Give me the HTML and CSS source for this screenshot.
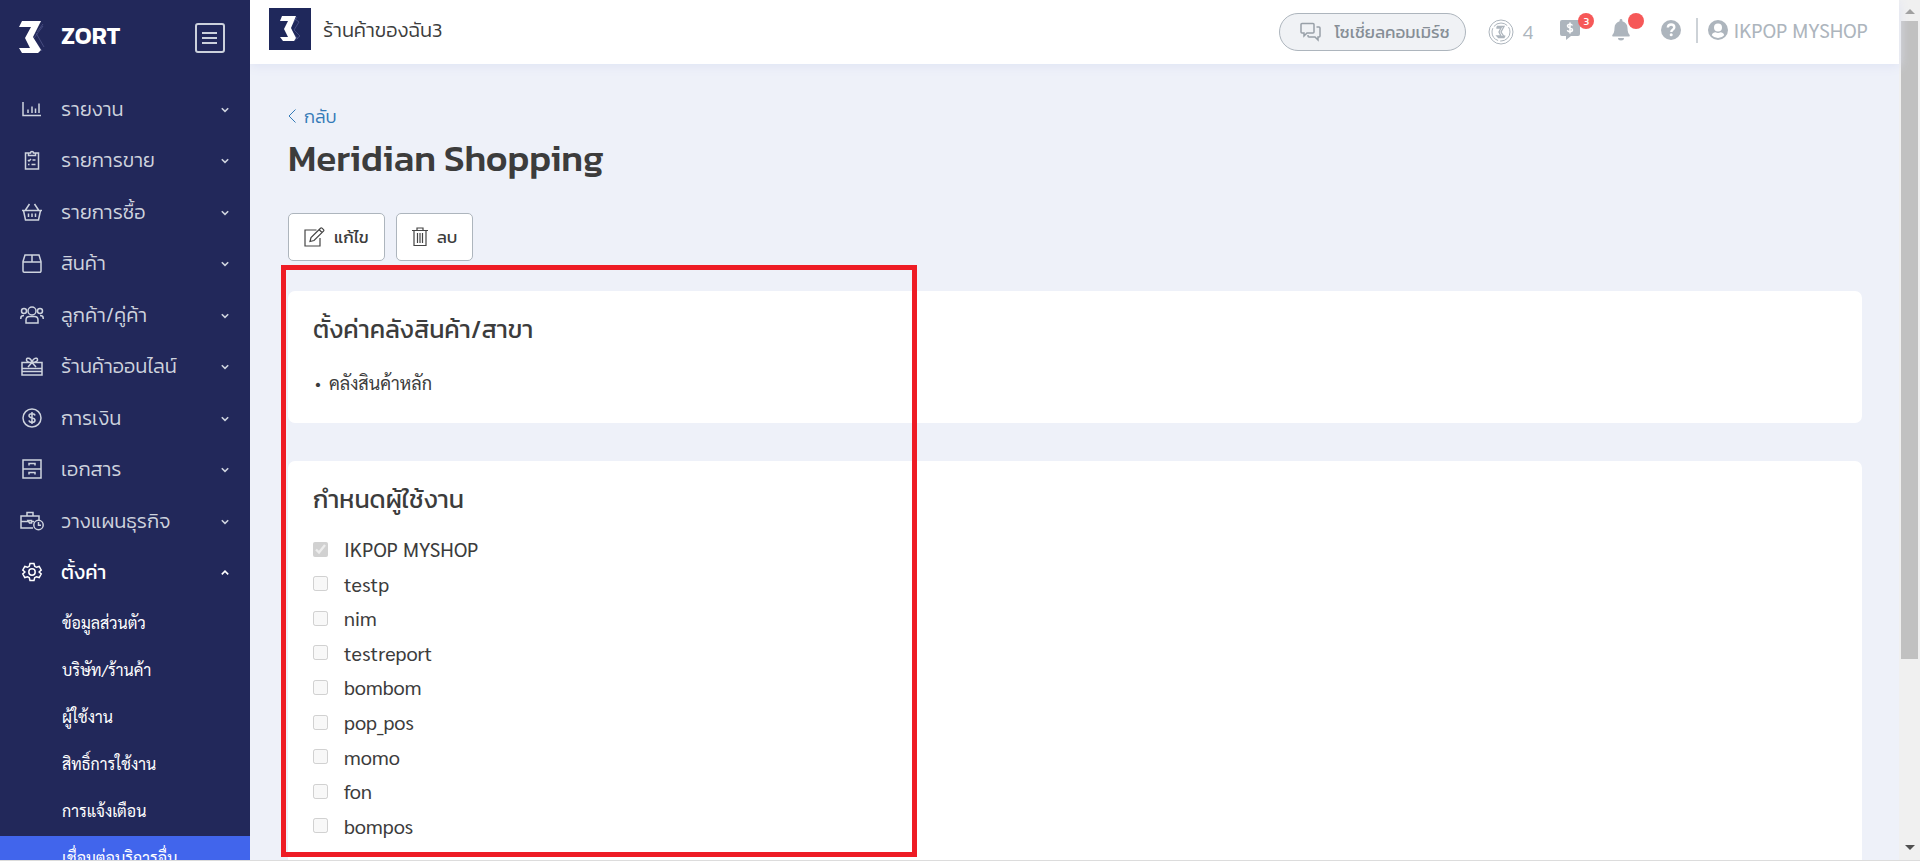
FILE: index.html
```html
<!DOCTYPE html>
<html lang="th">
<head>
<meta charset="utf-8">
<title>ZORT</title>
<link rel="stylesheet" href="styles.css">
</head>
<body>
<div class="app">
  <nav class="sidebar">
    <div class="brand">
      <svg class="brand-mark" width="26" height="33" viewBox="0 0 26 33"><path d="M14 1h8M24 3l-6 8M17 12l8 14M24 5l-9 12M15 19l8 11M13 31l5-9" stroke="#5d6397" stroke-width="1" fill="none" opacity=".6"/><path d="M3 0h19l-8 16 8 13-3 3H3L0 27h9l2 0-5-10L12 6H0z" fill="#fff"/></svg>
      <span class="brand-name">ZORT</span>
      <button class="collapse" aria-label="เมนู"><svg width="30" height="30" viewBox="0 0 30 30" fill="none" stroke="#ccd1dc" stroke-width="2"><rect x="1" y="1" width="28" height="28" rx="2"/><path d="M7 10h15M7 15h15M7 20h15"/></svg></button>
    </div>
    <ul class="menu">
      <li><a href="#"><svg class="mi" viewBox="0 0 24 24"><path d="M3 5v13.500h18M8 16v-3.500M12 16V9.500M15.500 16v-4.500M19 16V6.500"/></svg>รายงาน<svg class="chev" viewBox="0 0 10 10"><path d="M1 4l4 4 4-4"/></svg></a></li>
      <li><a href="#"><svg class="mi" viewBox="0 0 24 24"><path d="M8.500 5H5.500v16h13V5h-3M8.500 7.500V5h2a1.500 1.500 0 0 1 3 0h2v2.500zM8 12l1 1 2-2M12.500 12h3M8 16.500h1.500M11.500 16.500h4"/></svg>รายการขาย<svg class="chev" viewBox="0 0 10 10"><path d="M1 4l4 4 4-4"/></svg></a></li>
      <li><a href="#"><svg class="mi" viewBox="0 0 24 24"><path d="M2 10.500h20M3.500 10.500L5.500 20h13l2-9.500M9.500 4L5.500 10M14.500 4l4 6M8.500 13.500v3.500M12 13.500v3.500M15.500 13.500v3.500"/></svg>รายการซื้อ<svg class="chev" viewBox="0 0 10 10"><path d="M1 4l4 4 4-4"/></svg></a></li>
      <li><a href="#"><svg class="mi" viewBox="0 0 24 24"><path d="M3 10.500L5 4h14l2 6.500V20a1.200 1.200 0 0 1-1.200 1.200H4.200A1.200 1.200 0 0 1 3 20zM3 11h18M12 4v7"/></svg>สินค้า<svg class="chev" viewBox="0 0 10 10"><path d="M1 4l4 4 4-4"/></svg></a></li>
      <li><a href="#"><svg class="mi" viewBox="0 0 24 24"><circle cx="12" cy="8" r="4"/><circle cx="4" cy="8" r="2.500"/><circle cx="20" cy="8" r="2.500"/><path d="M6 20v-3c0-2 1.500-3.500 3.500-3.500h5c2 0 3.500 1.500 3.500 3.500v3zM.8 16v-1c0-1.500 1-2.500 3.200-2.500M23.200 16v-1c0-1.500-1-2.500-3.200-2.500"/></svg>ลูกค้า/คู่ค้า<svg class="chev" viewBox="0 0 10 10"><path d="M1 4l4 4 4-4"/></svg></a></li>
      <li><a href="#"><svg class="mi" viewBox="0 0 24 24"><path d="M2 8.500h20V21H2zM2 14.500h20M2 17.500h20M12 8.500C8 8.500 6 7 6.500 5.200S11 3.500 12 8.500c1-5 5-5 5.500-3.300S16 8.500 12 8.500l-4 4.500M12 8.500l4 4.500"/></svg>ร้านค้าออนไลน์<svg class="chev" viewBox="0 0 10 10"><path d="M1 4l4 4 4-4"/></svg></a></li>
      <li><a href="#"><svg class="mi" viewBox="0 0 24 24"><circle cx="12" cy="12" r="9"/><path d="M15 9.500c-.3-1.300-1.500-1.800-3-1.800s-3 .6-3 2.100c0 3.100 6 1.400 6 4.400 0 1.500-1.500 2.100-3 2.100s-2.800-.6-3-2M12 6v12"/></svg>การเงิน<svg class="chev" viewBox="0 0 10 10"><path d="M1 4l4 4 4-4"/></svg></a></li>
      <li><a href="#"><svg class="mi" viewBox="0 0 24 24"><path d="M3 3h18v18H3zM3 12h18M9 8.500v-2h6v2M9 17.500v-2h6v2"/></svg>เอกสาร<svg class="chev" viewBox="0 0 10 10"><path d="M1 4l4 4 4-4"/></svg></a></li>
      <li><a href="#"><svg class="mi" viewBox="0 0 24 24"><path d="M13 19H1V7h18v4M7 7V3.500h6V7M1 12.500h7.500M8 11.500h3.500v2.500H9.500zM11.500 12.500H14"/><circle cx="18.500" cy="16" r="4.700"/><path d="M18.500 13v3.200H21"/></svg>วางแผนธุรกิจ<svg class="chev" viewBox="0 0 10 10"><path d="M1 4l4 4 4-4"/></svg></a></li>
      <li class="open"><a href="#"><svg class="mi" viewBox="0 0 24 24"><circle cx="12" cy="12" r="3.200"/><path d="M10 3.500h4l.7 2.800 1.700 1 2.800-.8 2 3.500-2.100 2 2.100 2-2 3.500-2.800-.8-1.700 1-.7 2.800h-4l-.7-2.800-1.700-1-2.800.8-2-3.500 2.100-2-2.100-2 2-3.500 2.800.8 1.700-1z"/></svg>ตั้งค่า<svg class="chev" viewBox="0 0 10 10"><path d="M1 8l4-4 4 4"/></svg></a></li>
    </ul>
    <ul class="submenu">
      <li><a href="#">ข้อมูลส่วนตัว</a></li>
      <li><a href="#">บริษัท/ร้านค้า</a></li>
      <li><a href="#">ผู้ใช้งาน</a></li>
      <li><a href="#">สิทธิ์การใช้งาน</a></li>
      <li><a href="#">การแจ้งเตือน</a></li>
      <li class="active"><a href="#">เชื่อมต่อบริการอื่น</a></li>
    </ul>
  </nav>
  <div class="main">
    <header class="topbar">
      <svg class="shop-logo" width="42" height="42" viewBox="0 0 42 42"><path fill="#1f285b" d="M0 0h42v42H0z"/><path d="M22 8l8 6-5 8 6 6-6 5M28 9l-8 12 9 10" stroke="#5d6397" fill="none" opacity=".6"/><path d="M13 8h14l-5 12 5 10-2 3H14l-3-4h8l-4-8 4-8h-8z" fill="#fff"/></svg>
      <span class="shop-name">ร้านค้าของฉัน3</span>
      <button class="pill"><svg width="22" height="20" viewBox="0 0 22 20" fill="none" stroke="#98a0a8" stroke-width="1.500"><path d="M2 1.500h11a1 1 0 0 1 1 1V10a1 1 0 0 1-1 1H7l-3 3v-3H2a1 1 0 0 1-1-1V2.500a1 1 0 0 1 1-1z"/><path d="M16.500 5H19a1 1 0 0 1 1 1v8a1 1 0 0 1-1 1h-1v3l-3-3H9a1 1 0 0 1-1-1v-1"/></svg>โซเชี่ยลคอมเมิร์ซ</button>
      <a class="coin" href="#"><svg width="26" height="26" viewBox="0 0 26 26" fill="none" stroke="#adb5bd"><circle cx="13" cy="13" r="12"/><circle cx="13" cy="13" r="9" stroke-dasharray="15 2"/><path d="M9 7.500h7l-3 5.500 3 4.500h-6M9 7.500v1.500h4l-2 4 2 4H9l1.500 1.500H16l1-2" stroke-width="1.300"/></svg>4</a>
      <button class="note" aria-label="ข้อความ"><svg width="22" height="22" viewBox="0 0 22 22"><path fill="#adb5bd" d="M3 1h16a2 2 0 0 1 2 2v12a2 2 0 0 1-2 2h-7l-5 4v-4H3a2 2 0 0 1-2-2V3a2 2 0 0 1 2-2z"/><path d="M13.500 6.500c-.5-1-1.500-1.200-2.500-1.200s-2.500.4-2.500 1.800c0 2.300 5 1.300 5 3.700 0 1.400-1.400 1.900-2.500 1.900s-2.300-.4-2.600-1.600M11 3.500v11" fill="none" stroke="#fff" stroke-width="1.500"/></svg><span class="badge">3</span></button>
      <button class="note" aria-label="แจ้งเตือน"><svg width="20" height="22" viewBox="0 0 20 22" fill="#adb5bd"><path d="M10 0a1.400 1.400 0 0 1 1.400 1.400v.8C14.500 3 16.500 5.500 16.500 9c0 4 1 5.500 2 6.700.6.800.2 1.800-.9 1.800H2.400c-1.100 0-1.500-1-.9-1.800 1-1.200 2-2.700 2-6.700 0-3.500 2-6 5.100-6.800v-.8A1.400 1.400 0 0 1 10 0zM7 19h6a3 2.500 0 0 1-6 0z"/></svg><span class="badge"></span></button>
      <button class="help" aria-label="ช่วยเหลือ"><svg width="20" height="20" viewBox="0 0 20 20"><circle cx="10" cy="10" r="10" fill="#adb5bd"/><path d="M6.800 7.500c.2-2 1.500-3 3.300-3s3.200 1.100 3.200 2.800c0 2.400-3 2.300-3 4.700" fill="none" stroke="#fff" stroke-width="2.400"/><circle cx="10.200" cy="14.800" r="1.500" fill="#fff"/></svg></button>
      <a class="user" href="#"><svg width="20" height="20" viewBox="0 0 20 20"><circle cx="10" cy="10" r="10" fill="#adb5bd"/><circle cx="10" cy="7.500" r="4" fill="#fff"/><path d="M3.800 15.200c.6-2 2-2.900 3.700-2.900.8.400 1.600.6 2.500.6s1.700-.2 2.500-.6c1.700 0 3.100.9 3.700 2.900A8 8 0 0 1 10 18a8 8 0 0 1-6.200-2.800z" fill="#fff"/></svg>IKPOP MYSHOP</a>
    </header>
    <main class="content">
      <a class="back" href="#"><svg width="8" height="14" viewBox="0 0 8 14" fill="none" stroke="#337ab7"><path d="M7.500 .5L1 7l6.500 6.500"/></svg>กลับ</a>
      <h1>Meridian Shopping</h1>
      <div class="actions">
        <button class="btn"><svg width="21" height="20" viewBox="0 0 21 20" fill="none" stroke="#444" stroke-width="1.200"><path d="M12.500 3H1v16h15v-8M6 14.500l1-4L16.500 1.200c.5-.5 1-.5 1.500 0l1.500 1.500c.5.500.5 1 0 1.500L10 13.500zM15 2.500l3 3"/></svg>แก้ไข</button>
        <button class="btn"><svg width="16" height="20" viewBox="0 0 16 20" fill="none" stroke="#444" stroke-width="1.200"><path d="M0 3.500h16M2 3.500V18.500h12V3.500M5 3.500V1h6v2.500M5.500 6v10M8 6v10M10.500 6v10"/></svg>ลบ</button>
      </div>
      <section class="card">
        <h2>ตั้งค่าคลังสินค้า/สาขา</h2>
        <ul class="stock"><li>คลังสินค้าหลัก</li></ul>
      </section>
      <section class="card users">
        <h2>กำหนดผู้ใช้งาน</h2>
        <div class="checks">
          <label><input type="checkbox" checked disabled>IKPOP MYSHOP</label>
          <label><input type="checkbox" disabled>testp</label>
          <label><input type="checkbox" disabled>nim</label>
          <label><input type="checkbox" disabled>testreport</label>
          <label><input type="checkbox" disabled>bombom</label>
          <label><input type="checkbox" disabled>pop_pos</label>
          <label><input type="checkbox" disabled>momo</label>
          <label><input type="checkbox" disabled>fon</label>
          <label><input type="checkbox" disabled>bompos</label>
        </div>
      </section>
    </main>
    <div class="highlight"></div>
  </div>
  <div class="scrollbar">
    <svg width="10" height="6" viewBox="0 0 10 6"><path d="M0 5l5-5 5 5z" fill="#a0a0a0"/></svg>
    <div class="track"><div class="thumb"></div></div>
    <svg width="10" height="6" viewBox="0 0 10 6"><path d="M0 0l5 5 5-5z" fill="#505050"/></svg>
  </div>
</div>
<div class="edge"></div>
</body>
</html>
```
FILE: styles.css
```css
* { box-sizing: border-box; }
body { margin: 0; height: 100vh; display: flex; flex-direction: column; overflow: hidden; background: #fff; color: #3c3c3c; font-family: Kanit, "Noto Sans Thai", "Open Sans", sans-serif; font-size: 18px; }
a { color: inherit; text-decoration: none; }
ul { list-style: none; margin: 0; padding: 0; }
button { font: inherit; color: inherit; background: none; border: 0; padding: 0; }
svg { flex: none; display: block; }

.app { flex: 1; min-height: 0; display: flex; overflow: hidden; }
.edge { height: 5px; border-top: 1px solid #dcdcdc; }

.sidebar { position: relative; z-index: 1; flex: none; width: 250px; background: #22285a; color: #ced3de; overflow: hidden; }
.brand { display: flex; align-items: center; height: 83px; padding: 0 25px 8px 19px; }
.brand-mark { margin-right: 16px; }
.brand-name { padding-bottom: 3px; font-size: 24px; line-height: 30px; font-weight: 600; color: #fff; }
.collapse { margin-left: auto; }
.menu { display: grid; grid-auto-rows: 1fr; height: 515px; }
.menu a { display: flex; align-items: center; height: 100%; padding: 0 21px 0 20px; font-size: 20px; font-weight: 300; }
.mi { width: 24px; height: 24px; margin-right: 17px; fill: none; stroke: #ced3de; stroke-width: 1.5; }
.chev { width: 8px; height: 8px; margin-left: auto; fill: none; stroke: #ced3de; stroke-width: 2; }
.menu .open a { color: #fff; font-weight: 400; }
.open .mi, .open .chev { stroke: #fff; }
.submenu { padding-top: 3px; font-family: Sarabun, "Noto Sans Thai Looped", "Noto Sans", sans-serif; font-size: 16px; font-weight: 400; color: #fff; }
.submenu a { display: block; height: 47px; line-height: 43px; padding-left: 62px; }
.submenu .active { background: #4165ec; }

.main { position: relative; flex: 1; min-width: 0; background: #eef1f9; }
.topbar { display: flex; align-items: center; height: 64px; padding: 0 31px 0 19px; background: #fff; box-shadow: 0 2px 10px #dfe3f3; color: #adb5bd; }
.shop-logo { margin: 0 12px 6px 0; }
.shop-name { margin: 0 auto 4px 0; color: #3c3c3c; font-size: 20px; font-weight: 300; }
.pill { display: flex; align-items: center; gap: 12px; height: 38px; padding: 0 15px 0 20px; margin-right: 22px; border: 1px solid #adb5bd; border-radius: 19px; background: #f0f2f5; color: #868e96; font-size: 17px; }
.coin { display: flex; align-items: center; gap: 9px; margin-right: 26px; font-size: 20px; font-weight: 300; }
.note { position: relative; margin: 0 30px 5px 0; }
.badge { position: absolute; top: -6px; right: -13px; width: 16px; height: 16px; border-radius: 8px; background: #f65858; color: #fff; font-size: 11px; line-height: 16px; text-align: center; }
.help { margin: 0 15px 5px 0; }
.user { display: flex; align-items: center; gap: 5px; height: 25px; margin-bottom: 4px; padding-left: 10px; border-left: 2px solid #cdd2d7; font-family: Sarabun, Roboto, sans-serif; font-size: 20px; }

.content { padding: 39px 37px 0 38px; }
.back { display: flex; align-items: center; gap: 8px; height: 26px; color: #337ab7; font-size: 18px; font-weight: 300; }
h1 { margin: 3px 0 29px; font-size: 37px; line-height: 52px; font-weight: 500; }
.actions { display: flex; gap: 11px; margin-bottom: 30px; }
.btn { display: flex; align-items: center; gap: 9px; height: 48px; padding: 0 15px; border: 1px solid #adb5bd; border-radius: 5px; background: #fff; font-size: 17px; font-weight: 400; }
.card { padding: 20px 25px 22px; margin-bottom: 38px; border-radius: 7px; background: #fff; }
h2 { margin: 0 0 18px; font-size: 25px; line-height: 36px; font-weight: 400; }
.stock { font-family: Sarabun, "Noto Sans Thai Looped", sans-serif; font-size: 18px; line-height: 35px; }
.stock li::before { content: "•"; margin: 0 8px 0 2px; font-size: 16px; }
.users { padding-bottom: 80px; }
.users h2 { margin-bottom: 15px; }
.checks { display: grid; grid-auto-rows: 1fr; height: 311px; font-family: Sarabun, Roboto, sans-serif; font-size: 20px; }
.checks label { display: flex; align-items: center; gap: 16px; }
.checks input { width: 15px; height: 15px; margin: 0; }
.highlight { position: absolute; left: 31px; top: 265px; width: 636px; height: 592px; border: 5px solid #ee1c25; pointer-events: none; }

.scrollbar { flex: none; width: 21px; display: flex; flex-direction: column; align-items: center; background: #f0f0f0; padding: 9px 0; gap: 6px; }
.track { flex: 1; width: 17px; }
.thumb { height: 78%; background: #c1c1c1; }
```
